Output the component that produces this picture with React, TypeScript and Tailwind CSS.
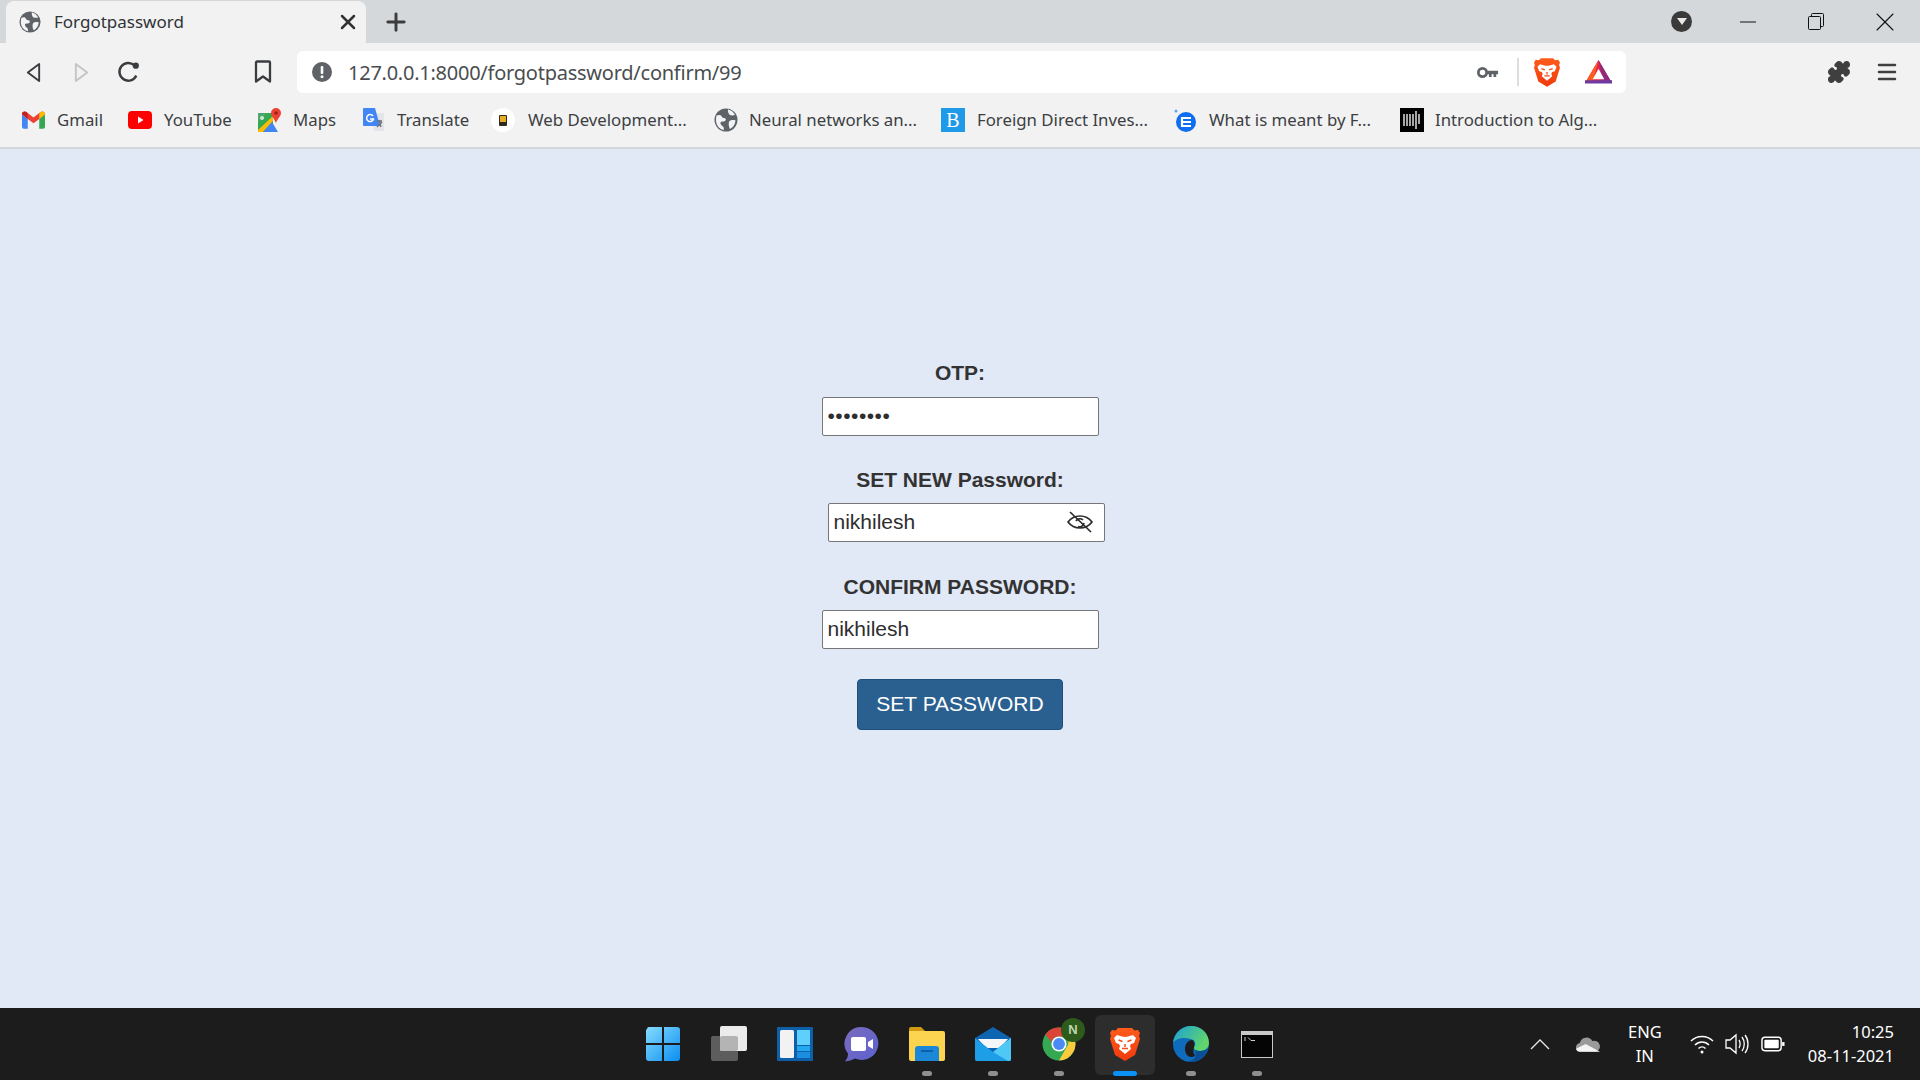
import React from 'react';
import { Puzzle, Plus, X, Minus, Menu } from 'lucide-react';

const chromeFont = "font-['Noto_Sans','Open_Sans',sans-serif]";

const Globe = ({ className = 'w-6 h-6' }: { className?: string }) => (
  <svg viewBox="0 0 24 24" className={className}>
    <circle cx="12" cy="12" r="11.500" fill="#5f6368" />
    <path d="M2.500 7.500C4 7 6 6.500 7 7.500s1 2.500 3 2.500 2.500 2 1 3-4 0-4.500 1.500S8 18 9.500 19c.5 1 .3 2.500.2 3.200C5 21 2 17 2 12c0-1.500.2-3 .5-4.500zM14 1.500c3 .5 5.500 2.500 7 5.500-2 .5-4 .5-5 0s-2.500-3-2-5.500zM15.500 13c1.500-1 4.500-1.200 6-.5-.3 4-2.500 7-5.500 8.500-1-2-2-6-.5-8z" fill="#f1f3f4" />
  </svg>
);

const Lion = ({ className = 'w-6 h-7', id }: { className?: string; id: string }) => (
  <svg viewBox="0 0 30 34" className={className}>
    <defs>
      <linearGradient id={id} x1="0" y1="0" x2="0" y2="1">
        <stop offset="0" stopColor="#ff5c1a" />
        <stop offset="1" stopColor="#f03a0e" />
      </linearGradient>
    </defs>
    <path d="M8 1h14l2.500 2.500L28 3l2 3-1 3 1 3-5 16-10 6-10-6L0 12l1-3-1-3 2-3 3.500.5z" fill={`url(#${id})`} />
    <path d="M7 8l5 1.500c2 .5 4 .5 6 0L23 8l3 3-2 5-3 1-1 2 1 3-6 5-6-5 1-3-1-2-3-1-2-5z" fill="#fff" />
    <path d="M8.500 13l4 1.500M21.500 13l-4 1.500M15 17v3M12 21.500h6" stroke="#f24d15" strokeWidth="1.500" fill="none" />
  </svg>
);

const Gmail = () => (
  <svg viewBox="0 0 24 18" className="w-[23px] h-[18px]">
    <path d="M0 3v13a2 2 0 0 0 2 2h4V8z" fill="#4285f4" />
    <path d="M24 3v13a2 2 0 0 1-2 2h-4V8z" fill="#34a853" />
    <path d="M0 3c0-3 3-3.500 5-2l7 5.500L19 1c2-1.500 5-1 5 2l-6 5-6 4.500L6 8z" fill="#ea4335" />
    <path d="M18 2.500L19 1c2-1.500 5-1 5 2l-6 5z" fill="#fbbc04" />
    <path d="M0 3c0-3 3-3.500 5-2l1 1.500V8z" fill="#c5221f" />
  </svg>
);

const YouTube = () => (
  <svg viewBox="0 0 24 18" className="w-6 h-[18px]">
    <rect width="24" height="18" rx="4" fill="#f00" />
    <path d="M10 5.500l5.500 3.500-5.500 3.500z" fill="#fff" />
  </svg>
);

const Maps = () => (
  <svg viewBox="0 0 24 24" className="w-6 h-6">
    <path d="M0 5h15v19H0z" fill="#34a853" />
    <path d="M0 5h9L0 14z" fill="#4fa56b" />
    <path d="M0 22L15 8v5L5 24H0z" fill="#fbbc04" />
    <path d="M5 24l9-10 6 10z" fill="#4285f4" />
    <path d="M4 8a2 2 0 1 0 .1 0z" fill="#cfe8d5" />
    <path d="M18 0a5 5 0 0 1 5 5c0 3-3 5-5 10-2-5-5-7-5-10a5 5 0 0 1 5-5z" fill="#ea4335" />
    <circle cx="18" cy="5" r="1.800" fill="#a51d16" />
  </svg>
);

const Translate = () => (
  <svg viewBox="0 0 24 26" className="w-6 h-[26px]">
    <path d="M9 6h13v18H12z" fill="#e3e5e8" />
    <path d="M2 1h11l5 18H2a1 1 0 0 1-1-1V2a1 1 0 0 1 1-1z" fill="#4285f4" />
    <path d="M11 9a3.500 3.500 0 1 0 .5 3H8" fill="none" stroke="#fff" strokeWidth="1.500" />
    <path d="M15 14h5M17 13l2 7M20 15l-5 5" stroke="#6b7074" strokeWidth="1.300" fill="none" />
  </svg>
);

const WebDev = () => (
  <svg viewBox="0 0 24 24" className="w-6 h-6">
    <circle cx="12" cy="12" r="12" fill="#fff" />
    <rect x="8" y="7" width="8" height="11" rx="1" fill="#2f2a1e" />
    <rect x="9" y="8" width="6" height="6" fill="#e7ad24" />
  </svg>
);

const BIcon = () => (
  <div className="w-6 h-6 bg-[#1e9ae8] text-white text-[20px] leading-6 text-center font-['Liberation_Serif',serif]">B</div>
);

const EIcon = () => (
  <svg viewBox="0 0 24 26" className="w-6 h-[26px]">
    <circle cx="3" cy="4" r="1.500" fill="#5ba8ee" />
    <circle cx="13" cy="15" r="10" fill="#0f6df0" />
    <path d="M18 11H9v8h9M9 15h9" stroke="#fff" strokeWidth="2.200" fill="none" />
  </svg>
);

const AlgIcon = () => (
  <svg viewBox="0 0 24 24" className="w-6 h-6">
    <rect width="24" height="24" fill="#000" />
    <path d="M4 6v12M7 6v12M10 6v12M13 6v12M16 3v18M19 6v10" stroke="#fff" strokeWidth="1.300" />
  </svg>
);

const bookmarks = [
  { label: 'Gmail', icon: <Gmail />, width: 'w-[47px]', gap: 'ml-3', space: 'mr-6' },
  { label: 'YouTube', icon: <YouTube />, width: 'w-[70px]', gap: 'ml-[12px]', space: 'mr-[24px]' },
  { label: 'Maps', icon: <Maps />, width: 'w-[44px]', gap: 'ml-[11px]', space: 'mr-[25px]' },
  { label: 'Translate', icon: <Translate />, width: 'w-[71px]', gap: 'ml-[11px]', space: 'mr-[23px]' },
  { label: 'Web Development...', icon: <WebDev />, width: 'w-[162px]', gap: 'ml-[13px]', space: 'mr-[24px]' },
  { label: 'Neural networks an...', icon: <Globe />, width: 'w-[167px]', gap: 'ml-[11px]', space: 'mr-[25px]' },
  { label: 'Foreign Direct Inves...', icon: <BIcon />, width: 'w-[172px]', gap: 'ml-[12px]', space: 'mr-[24px]' },
  { label: 'What is meant by F...', icon: <EIcon />, width: 'w-[166px]', gap: 'ml-[12px]', space: 'mr-[25px]' },
  { label: 'Introduction to Alg...', icon: <AlgIcon />, width: 'w-[165px]', gap: 'ml-[11px]', space: '' },
];

const Win = () => (
  <svg viewBox="0 0 36 36" className="w-9 h-9">
    <defs>
      <linearGradient id="winG" x1="0" y1="0" x2="1" y2="1">
        <stop offset="0" stopColor="#86dcff" />
        <stop offset="1" stopColor="#0a8ef0" />
      </linearGradient>
    </defs>
    <path d="M2 3a2 2 0 0 1 2-2h13v16H1V4zM19 1h13a3 3 0 0 1 3 3v13H19zM1 19h16v16H4a3 3 0 0 1-3-3zM19 19h16v13a3 3 0 0 1-3 3H19z" fill="url(#winG)" />
  </svg>
);

const TaskView = () => (
  <svg viewBox="0 0 36 36" className="w-9 h-9">
    <rect x="0" y="10" width="27" height="25" rx="2" fill="#5d5d5d" />
    <rect x="9" y="0" width="27" height="25" rx="2" fill="#ececec" />
    <rect x="9" y="10" width="18" height="15" rx="2" fill="#b4b4b4" />
  </svg>
);

const Widgets = () => (
  <svg viewBox="0 0 36 34" className="w-9 h-[34px]">
    <rect width="36" height="34" rx="1" fill="#0d5fa8" />
    <rect x="3" y="3" width="14" height="28" rx="1.500" fill="#f2f2f2" />
    <rect x="20" y="3" width="13" height="15" fill="#5fd0fb" />
    <rect x="20" y="19" width="13" height="5" fill="#22a8ef" />
    <rect x="20" y="25" width="13" height="6" fill="#1a8fe0" />
  </svg>
);

const Chat = () => (
  <svg viewBox="0 0 36 36" className="w-9 h-9">
    <defs>
      <linearGradient id="chatG" x1="0" y1="0" x2="1" y2="1">
        <stop offset="0" stopColor="#7b6bbd" />
        <stop offset="1" stopColor="#5a62d0" />
      </linearGradient>
    </defs>
    <path d="M19 1a16.500 16.500 0 1 1-7 31.500c-3 1.500-6 2.500-10 3 2-2.500 3-5 3-8A16.500 16.500 0 0 1 19 1z" fill="url(#chatG)" />
    <rect x="8" y="11" width="15" height="14" rx="2" fill="#fff" />
    <path d="M25 16l5-3v10l-5-3z" fill="#fff" />
  </svg>
);

const Explorer = () => (
  <svg viewBox="0 0 36 34" className="w-9 h-[34px]">
    <path d="M0 2a2 2 0 0 1 2-2h10l4 4H0z" fill="#d19b0f" />
    <path d="M0 4h34a2 2 0 0 1 2 2v26a2 2 0 0 1-2 2H2a2 2 0 0 1-2-2z" fill="#fcd44f" />
    <path d="M6 22a3 3 0 0 1 3-3h18a3 3 0 0 1 3 3v12H6z" fill="#1b87d8" />
    <rect x="12" y="23" width="12" height="2" fill="#0d5fa8" />
  </svg>
);

const Mail = () => (
  <svg viewBox="0 0 36 34" className="w-9 h-[34px]">
    <path d="M0 11L18 0l18 11v21a2 2 0 0 1-2 2H2a2 2 0 0 1-2-2z" fill="#0d64b0" />
    <path d="M3 12h30l-8 9H11z" fill="#f4f6f8" />
    <path d="M0 11l18 14 18-14v21a2 2 0 0 1-2 2H2a2 2 0 0 1-2-2z" fill="#1e9ee6" />
    <path d="M36 11v21a2 2 0 0 1-2 2h-1L18 25z" fill="#50c8f6" />
  </svg>
);

const ChromeN = () => (
  <div className="relative w-[34px] h-[34px]">
    <svg viewBox="0 0 36 36" className="w-[34px] h-[34px]">
      <circle cx="18" cy="18" r="17.500" fill="#34a853" />
      <path d="M18 .5A17.500 17.500 0 0 1 33.500 10H18a8 8 0 0 0-8 6L3.500 8A17.500 17.500 0 0 1 18 .5z" fill="#db4437" />
      <path d="M33.500 10A17.500 17.500 0 0 1 18 35.500l8-14a8 8 0 0 0-1-11.500z" fill="#fbcb3e" />
      <circle cx="18" cy="18" r="8" fill="#fff" />
      <circle cx="18" cy="18" r="6.300" fill="#4a8af4" />
    </svg>
    <div className="absolute -top-[9px] -right-[9px] w-6 h-6 rounded-full bg-[#2e5a1c] text-[#bcd6ad] text-[13px] leading-6 text-center font-bold font-['Liberation_Sans',sans-serif]">N</div>
  </div>
);

const Edge = () => (
  <svg viewBox="0 0 36 36" className="w-9 h-9">
    <defs>
      <linearGradient id="edgeG" x1="0" y1="0" x2="1" y2="0.500">
        <stop offset="0" stopColor="#1a9fd8" />
        <stop offset="1" stopColor="#62d66a" />
      </linearGradient>
    </defs>
    <circle cx="18" cy="18" r="18" fill="#0f6cbd" />
    <path d="M0 17C1 7 9 0 18 0c10 0 18 7 18 17 0 5-4 8-9 8-4 0-6-1.500-6.500-3.500 3-2.500 2.500-7-2.500-8.500C11 11 3 12 0 17z" fill="url(#edgeG)" />
    <path d="M20.500 21.500c.5 2 2.500 3.500 6.500 3.500 3 0 6-1 8-3-2 8-9 14-17 14-2 0-4-.5-5-1 4.500.5 8.500-1 9.500-5 .5-3 0-6-2-8.500z" fill="#0a4f96" />
    <path d="M12 23c0-5 3-9 7-9 2 .5 3 3.500 2 7.500-1 3-1 6 1 8-4 3.500-10 .5-10-6.500z" fill="#1c1c1c" />
  </svg>
);

const Terminal = () => (
  <svg viewBox="0 0 32 27" className="w-8 h-[27px]">
    <rect width="32" height="27" fill="#c8c8c8" />
    <rect x="1" y="4" width="30" height="22" fill="#050505" />
    <path d="M3 7h2M3 9h2M7 6.500l3 3M10 9.500h4" stroke="#cfcfcf" strokeWidth="1" />
  </svg>
);

const taskbarApps = [
  { key: 'start', icon: <Win />, dot: '' },
  { key: 'tasks', icon: <TaskView />, dot: '' },
  { key: 'widgets', icon: <Widgets />, dot: '' },
  { key: 'chat', icon: <Chat />, dot: '' },
  { key: 'explorer', icon: <Explorer />, dot: 'w-[10px] bg-[#8f8f8f]' },
  { key: 'mail', icon: <Mail />, dot: 'w-[10px] bg-[#8f8f8f]' },
  { key: 'chrome', icon: <ChromeN />, dot: 'w-[10px] bg-[#8f8f8f]' },
  { key: 'brave', icon: <Lion id="braveTask" className="w-[30px] h-[34px]" />, dot: 'w-6 bg-[#0a91f5]', active: true },
  { key: 'edge', icon: <Edge />, dot: 'w-[10px] bg-[#8f8f8f]' },
  { key: 'terminal', icon: <Terminal />, dot: 'w-[10px] bg-[#8f8f8f]' },
];

const inputClass =
  "w-[277px] h-[39px] bg-white border border-[#767676] rounded-[2px] px-[5px] pb-[1px] flex items-center text-[21px] text-[#2e2e2e]";
const labelClass = "text-[21px] font-bold text-[#333] leading-6 text-center";

export default function App() {
  return (
    <div className="w-[1920px] h-[1080px] flex flex-col overflow-hidden bg-[#e1e8f6] font-['Liberation_Sans',sans-serif]">
      {/* tab strip */}
      <div className={`h-[43px] bg-[#d5d8db] flex items-end ${chromeFont}`}>
        <div className="ml-[6px] w-[360px] h-[42px] bg-[#f2f2f2] rounded-t-lg flex items-center pl-[13px] pr-[6px]">
          <Globe className="w-[22px] h-[22px]" />
          <span className="ml-[13px] text-[17px] text-[#2f3336]">Forgotpassword</span>
          <X className="ml-auto w-6 h-6 text-[#333]" strokeWidth={2.500} />
        </div>
        <Plus className="ml-[16px] mb-[7px] w-7 h-7 text-[#3c3c3c]" strokeWidth={2.500} />
        <div className="ml-auto flex items-center h-[43px]">
          <div className="w-[21px] h-[21px] rounded-full bg-[#3a3a3a] flex items-center justify-center">
            <div className="w-0 h-0 border-l-[5px] border-r-[5px] border-t-[7px] border-l-transparent border-r-transparent border-t-[#e8e8e8]" />
          </div>
          <Minus className="ml-[43px] w-[26px] h-[26px] text-[#111]" strokeWidth={1} />
          <svg viewBox="0 0 16 18" className="ml-[47px] w-[16px] h-[18px] fill-none stroke-[#111]">
            <rect x="0.500" y="3.500" width="12" height="13" rx="1" />
            <path d="M3.500 3.500V1.500a1 1 0 0 1 1-1h10a1 1 0 0 1 1 1v11a1 1 0 0 1-1 1h-2" />
          </svg>
          <X className="ml-[45px] mr-[19px] w-8 h-8 text-[#111]" strokeWidth={0.800} />
        </div>
      </div>

      {/* toolbar */}
      <div className="h-[50px] bg-[#f2f2f2] flex items-end">
        <svg viewBox="0 0 18 22" className="ml-[25px] mb-[10px] w-[17px] h-[21px] fill-none stroke-[#3a3d40] stroke-2">
          <path d="M15 2v18L3 11z" strokeLinejoin="round" />
        </svg>
        <svg viewBox="0 0 18 22" className="ml-[31px] mb-[10px] w-[17px] h-[21px] fill-none stroke-[#c2c4c6] stroke-2">
          <path d="M3 2v18l12-9z" strokeLinejoin="round" />
        </svg>
        <svg viewBox="0 0 24 24" className="ml-[26px] mb-[8px] w-[25px] h-[25px] fill-none stroke-[#3a3d40]">
          <path d="M19.500 15a8.500 8.500 0 1 1-2-10" strokeWidth="2.300" />
          <circle cx="19" cy="5.500" r="3" fill="#3a3d40" stroke="none" />
        </svg>
        <svg viewBox="0 0 20 24" className="ml-[112px] mb-[9px] w-[20px] h-6 fill-none stroke-[#3a3d40] stroke-[2.300]">
          <path d="M3 2.500a1 1 0 0 1 1-1h12a1 1 0 0 1 1 1v19l-7-5-7 5z" strokeLinejoin="round" />
        </svg>
        <div className={`ml-[24px] w-[1329px] h-[42px] bg-white rounded-md flex items-center ${chromeFont}`}>
          <svg viewBox="0 0 20 20" className="ml-[15px] w-5 h-5">
            <circle cx="10" cy="10" r="10" fill="#5f6368" />
            <rect x="8.700" y="4" width="2.600" height="8" rx="1" fill="#fff" />
            <circle cx="10" cy="14.800" r="1.500" fill="#fff" />
          </svg>
          <span className="ml-[16px] mt-[1px] text-[20px] tracking-[-0.250px] text-[#4a4d50]">127.0.0.1:8000/forgotpassword/confirm/99</span>
          <svg viewBox="0 0 24 14" className="ml-auto w-[22px] h-[13px]">
            <circle cx="6" cy="7" r="4.500" fill="none" stroke="#5f6368" strokeWidth="3" />
            <path d="M10 5h13v4h-2v3h-3V9h-2v3h-3V9h-3z" fill="#5f6368" />
          </svg>
          <div className="ml-[18px] w-[2px] h-7 bg-[#dcdcdc]" />
          <Lion id="braveBar" className="ml-[15px] w-[26px] h-[30px]" />
          <svg viewBox="0 0 28 26" className="ml-[25px] mr-[14px] w-[27px] h-[25px]">
            <path d="M14 0L0 24h28z" fill="#e1254e" />
            <path d="M14 0L0 24h8z" fill="#ff5a20" />
            <path d="M14 0l14 24H19z" fill="#8e2b7d" />
            <path d="M0 21h28l1 3.500H-1z" fill="#6e3aa0" />
            <path d="M14 9l6 11H8z" fill="#fff" />
          </svg>
        </div>
        <Puzzle className="ml-[201px] mb-[9px] w-6 h-6 text-[#3f3f3f] fill-[#3f3f3f]" />
        <Menu className="ml-[24px] mb-[9px] w-6 h-6 text-[#3f3f3f]" strokeWidth={2.500} />
      </div>

      {/* bookmarks */}
      <div className={`h-[56px] bg-[#f2f2f2] border-b-2 border-[#d5d8db] flex items-center pl-[21px] text-[16.800px] text-[#3c4043] ${chromeFont}`}>
        {bookmarks.map((b) => (
          <div key={b.label} className={`flex items-center ${b.space}`}>
            <div className="w-6 flex justify-center">{b.icon}</div>
            <span className={`${b.gap} ${b.width} whitespace-nowrap`}>{b.label}</span>
          </div>
        ))}
      </div>

      {/* page */}
      <div className="flex-1 flex flex-col items-center pt-[212px]">
        <label className={labelClass}>OTP:</label>
        <div className={`${inputClass} mt-[12px] text-[13px] tracking-[0.500px]`}>••••••••</div>
        <label className={`${labelClass} mt-[32px]`}>SET NEW Password:</label>
        <div className={`${inputClass} mt-[11px] ml-3`}>
          nikhilesh
          <svg viewBox="0 0 26 22" className="ml-auto mr-[6px] w-[26px] h-[22px] fill-none stroke-[#2c2c2c] stroke-[1.700]">
            <path d="M1 11c3-4 7-6 12-6s9 2 12 6c-3 4-7 6-12 6S4 15 1 11z" />
            <path d="M9 10a4.500 4.500 0 0 1 7-1M17 12a4.500 4.500 0 0 1-6 3.500" />
            <path d="M3 1l21 20" />
          </svg>
        </div>
        <label className={`${labelClass} mt-[33px]`}>CONFIRM PASSWORD:</label>
        <div className={`${inputClass} mt-[11px]`}>nikhilesh</div>
        <button className="mt-[30px] w-[206px] h-[51px] pb-[1px] bg-[#2a6090] border border-[#1f4f7c] rounded-[4px] text-white text-[21px]">
          SET PASSWORD
        </button>
      </div>

      {/* taskbar */}
      <div className={`h-[72px] bg-[#1c1c1c] grid grid-cols-[1fr_auto_1fr] items-center text-white text-[16.500px] ${chromeFont}`}>
        <div />
        <div className="flex h-[72px] items-start">
          {taskbarApps.map((app) => (
            <div key={app.key} className="relative w-[66px] h-[72px] flex flex-col items-center">
              {app.active && <div className="absolute top-[7px] left-[3px] w-[60px] h-[60px] rounded-md bg-[#2d2d2d]" />}
              <div className="relative mt-[18px] h-9 flex items-center">{app.icon}</div>
              {app.dot && <div className={`relative mt-[9px] h-[5px] rounded-full ${app.dot}`} />}
            </div>
          ))}
        </div>
        <div className="flex items-center justify-end pr-[26px]">
          <svg viewBox="0 0 20 12" className="w-[20px] h-3 fill-none stroke-[#e8e8e8]">
            <path d="M1 11l9-9 9 9" strokeWidth="1.300" />
          </svg>
          <svg viewBox="0 0 26 16" className="ml-[26px] w-[25px] h-4">
            <path d="M5 16a4.500 4.500 0 0 1-1-9 7 7 0 0 1 13-2 5.500 5.500 0 0 1 4 11z" fill="#9a9a9a" />
            <path d="M0 13l10-5 15 8H4a4 4 0 0 1-4-3z" fill="#f4f4f4" />
          </svg>
          <div className="ml-[23px] w-[42px] text-center leading-6">
            <div>ENG</div>
            <div>IN</div>
          </div>
          <svg viewBox="0 0 24 20" className="ml-[24px] w-6 h-5 fill-none stroke-white stroke-[1.500]">
            <path d="M1 7c6-6 16-6 22 0M5 11c4-4 10-4 14 0M8.500 14.500c2-2 5-2 7 0" />
            <circle cx="12" cy="18" r="1.500" fill="#fff" stroke="none" />
          </svg>
          <svg viewBox="0 0 24 22" className="ml-[11px] w-6 h-[22px] fill-none stroke-white stroke-[1.300]">
            <path d="M1 7h4l6-5v18l-6-5H1zM14 7c1.500 2 1.500 6 0 8M17 4c3 4 3 10 0 14M20 2c4 5 4 13 0 18" />
          </svg>
          <svg viewBox="0 0 25 16" className="ml-[12px] w-6 h-4 fill-none stroke-white stroke-[1.500]">
            <rect x="1" y="1" width="20" height="14" rx="3" />
            <rect x="3.500" y="3.500" width="15" height="9" rx="1" fill="#fff" stroke="none" />
            <rect x="22" y="6" width="2.500" height="4" fill="#fff" stroke="none" />
          </svg>
          <div className="ml-[23px] text-right leading-6">
            <div>10:25</div>
            <div>08-11-2021</div>
          </div>
        </div>
      </div>
    </div>
  );
}
